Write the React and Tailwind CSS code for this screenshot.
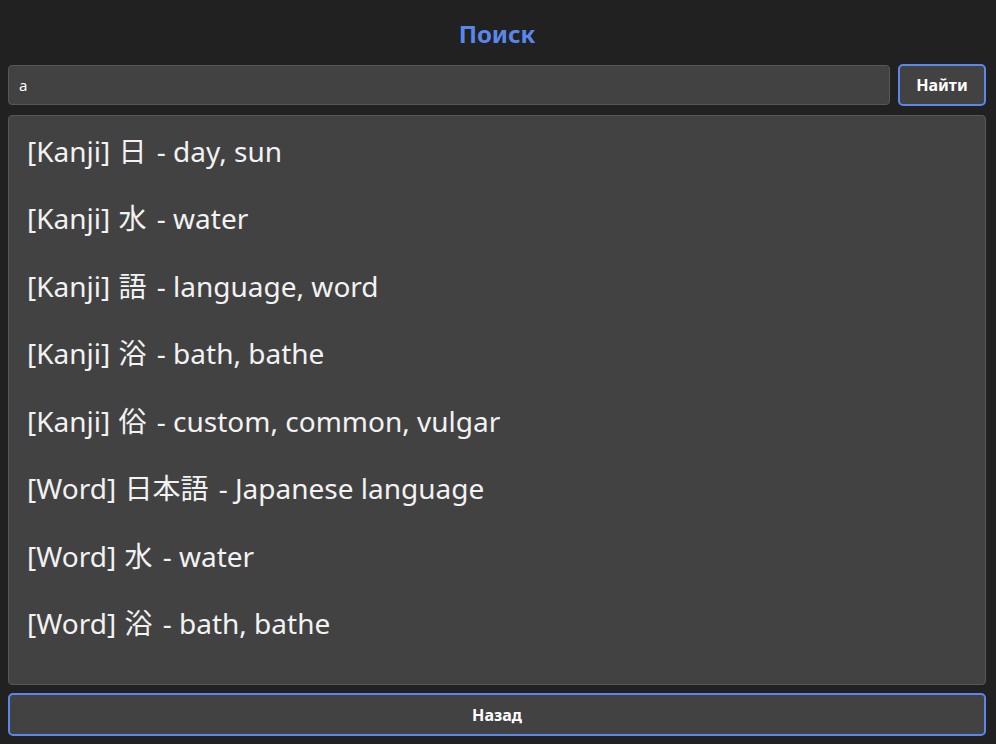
const results = [
  { tag: 'Kanji', jp: '日', en: 'day, sun' },
  { tag: 'Kanji', jp: '水', en: 'water' },
  { tag: 'Kanji', jp: '語', en: 'language, word' },
  { tag: 'Kanji', jp: '浴', en: 'bath, bathe' },
  { tag: 'Kanji', jp: '俗', en: 'custom, common, vulgar' },
  { tag: 'Word', jp: '日本語', en: 'Japanese language' },
  { tag: 'Word', jp: '水', en: 'water' },
  { tag: 'Word', jp: '浴', en: 'bath, bathe' },
];

const font = { fontFamily: '"Noto Sans", "Noto Sans CJK JP", sans-serif' };

export default function App() {
  return (
    <div
      className="h-[744px] w-full bg-[#212121] flex flex-col pl-2 pr-[10px] pb-2 text-white"
      style={font}
    >
      <div className="h-[64px] flex items-center justify-center pt-[4px]">
        <h1 className="text-[24px] font-bold text-[#5b87ea]">Поиск</h1>
      </div>

      <div className="flex gap-2 h-[42px] items-center">
        <input
          defaultValue="a"
          className="flex-1 h-[40px] bg-[#424242] border border-[#575757] rounded-[4px] px-[10px] text-[15px] text-white outline-none"
        />
        <button className="w-[88px] h-[42px] bg-[#424242] border-2 border-[#5b87ea] rounded-[5px] text-[16px] font-bold text-white">
          Найти
        </button>
      </div>

      <div className="mt-[9px] flex-1 bg-[#424242] border border-[#575757] rounded-[4px] pt-[1px] px-[18px] overflow-hidden">
        {results.map((r) => (
          <div
            key={r.tag + r.jp}
            className="h-[67.5px] flex items-center text-[28px] text-[#f2f2f2] whitespace-pre"
          >
            [{r.tag}] <span className="ml-[1px] mr-[3px]">{r.jp}</span> - {r.en}
          </div>
        ))}
      </div>

      <button className="mt-2 h-[43px] w-full bg-[#424242] border-2 border-[#5b87ea] rounded-[5px] text-[16px] font-bold text-white">
        Назад
      </button>
    </div>
  );
}
